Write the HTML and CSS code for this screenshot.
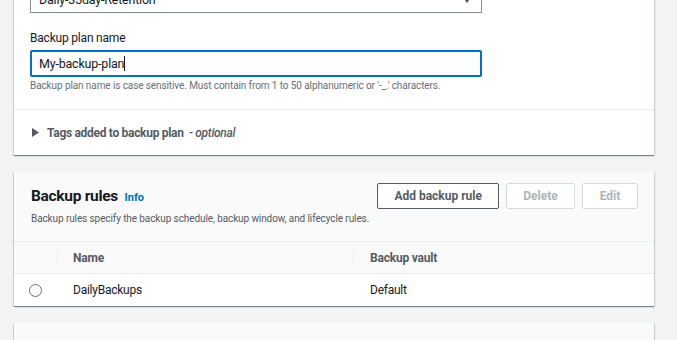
FILE: index.html
```html
<!DOCTYPE html>
<html lang="en">
<head>
  <meta charset="UTF-8">
  <meta name="viewport" content="width=device-width, initial-scale=1.0">
  <title>Create backup plan</title>
  <link rel="stylesheet" href="styles.css">
</head>
<body>

<div class="content">
  <div class="card plan-card">
    <div class="card-body">
      <div class="select-box">
        <span>Daily-35day-Retention</span>
        <svg class="caret" width="10" height="8" viewBox="0 0 10 8"><path d="M0 0h10L5 7z" fill="#545b64"/></svg>
      </div>

      <label class="field-label" for="plan-name">Backup plan name</label>
      <div class="text-input">My-backup-plan<span class="cursor"></span></div>
      <div class="hint">Backup plan name is case sensitive. Must contain from 1 to 50 alphanumeric or '-_.' characters.</div>
    </div>
    <div class="card-footer">
      <svg class="expand" width="7" height="9" viewBox="0 0 7 9"><path d="M0 0l7 4.5L0 9z" fill="#545b64"/></svg>
      <span class="tags-title">Tags added to backup plan</span>
      <span class="optional">  - optional</span>
    </div>
  </div>

  <div class="card rules-card">
    <div class="rules-header">
      <div class="rules-top">
        <h2>Backup rules <a class="info" href="#">Info</a></h2>
        <div class="actions">
          <button class="btn">Add backup rule</button>
          <button class="btn disabled">Delete</button>
          <button class="btn disabled edit">Edit</button>
        </div>
      </div>
      <p class="desc">Backup rules specify the backup schedule, backup window, and lifecycle rules.</p>
    </div>
    <div class="table">
      <div class="row head">
        <div class="cell sel"></div>
        <div class="cell name"><span class="sep"></span>Name</div>
        <div class="cell vault"><span class="sep"></span>Backup vault</div>
      </div>
      <div class="row">
        <div class="cell sel"><span class="radio"></span></div>
        <div class="cell name">DailyBackups</div>
        <div class="cell vault">Default</div>
      </div>
    </div>
  </div>

  <div class="card next-card"></div>
</div>

</body>
</html>
```

FILE: styles.css
```css
body {
  margin: 0;
  background-color: #f2f3f3;
  font-family: Roboto, "Liberation Sans", sans-serif;
  color: #16191f;
}

.content {
  width: 640px;
  margin-left: 14px;
  margin-top: -34px;
}

.card {
  background-color: #fff;
  box-shadow: 0 1px 1px 0 rgba(0, 28, 36, 0.35), 1px 1px 1px 0 rgba(0, 28, 36, 0.12), -1px 1px 1px 0 rgba(0, 28, 36, 0.12);
  margin-bottom: 17px;
}

.card-body {
  padding: 20px 16px 17px 16px;
}

.select-box {
  height: 25px;
  border: 1px solid #879596;
  display: flex;
  align-items: center;
  justify-content: space-between;
  padding: 0 9px 0 8px;
  box-sizing: content-box;
  width: 433px;
  font-size: 12.5px;
  letter-spacing: -0.2px;
}

.field-label {
  display: block;
  font-size: 12px;
  letter-spacing: -0.2px;
  margin-top: 17px;
  line-height: 16px;
}

.text-input {
  margin-top: 4px;
  height: 23px;
  border: 2px solid #0073bb;
  border-radius: 2px;
  font-size: 12.5px;
  letter-spacing: -0.2px;
  line-height: 23px;
  padding-left: 7px;
  box-sizing: content-box;
  width: 441px;
}

.cursor {
  display: inline-block;
  width: 1px;
  height: 15px;
  background-color: #16191f;
  vertical-align: -3px;
}

.hint {
  font-size: 10px;
  letter-spacing: -0.1px;
  color: #687078;
  margin-top: 3px;
  line-height: 12px;
}

.card-footer {
  border-top: 1px solid #eaeded;
  height: 45px;
  display: flex;
  align-items: center;
  padding-left: 18px;
  font-size: 12px;
  letter-spacing: -0.3px;
  color: #545b64;
}

.card-footer .expand {
  margin-right: 8px;
}

.tags-title {
  font-weight: bold;
}

.optional {
  font-style: italic;
  font-weight: 500;
  white-space: pre;
}

.rules-card {
  overflow: hidden;
}

.rules-header {
  background-color: #fafafa;
  padding: 11px 16px 0 17px;
  height: 58px;
  border-bottom: 1px solid #eaeded;
}

.rules-top {
  display: flex;
  justify-content: space-between;
  align-items: center;
}

.rules-top h2 {
  margin: 0;
  font-size: 15.5px;
  letter-spacing: -0.3px;
  font-weight: bold;
}

.info {
  font-size: 11px;
  letter-spacing: 0;
  color: #0073bb;
  text-decoration: none;
  margin-left: 3px;
  font-weight: bold;
}

.actions {
  display: flex;
  gap: 7px;
}

.btn {
  font-family: inherit;
  height: 26px;
  padding: 0 16px;
  background-color: #fff;
  border: 1px solid #545b64;
  border-radius: 2px;
  color: #545b64;
  font-weight: bold;
  font-size: 12px;
}

.btn.disabled {
  border-color: #d5dbdb;
  color: #aab7b8;
  width: 69px;
}

.btn.edit {
  width: 56px;
}

.desc {
  margin: 4px 0 0 0;
  font-size: 10px;
  letter-spacing: -0.1px;
  color: #545b64;
}

.row {
  display: flex;
  height: 32px;
  align-items: center;
  font-size: 12px;
  letter-spacing: -0.25px;
}

.row.head {
  height: 31px;
  background-color: #fafafa;
  border-bottom: 1px solid #eaeded;
  color: #545b64;
  font-weight: bold;
  letter-spacing: -0.2px;
}

.cell {
  position: relative;
  display: flex;
  align-items: center;
  height: 100%;
}

.cell.sel {
  width: 43px;
  justify-content: center;
}

.cell.name {
  width: 280px;
  padding-left: 16px;
}

.cell.vault {
  padding-left: 17px;
}

.sep {
  position: absolute;
  left: 0;
  top: 8px;
  bottom: 7px;
  border-left: 1px solid #eaeded;
}

.radio {
  width: 11px;
  height: 11px;
  border: 1px solid #687078;
  border-radius: 50%;
}

.next-card {
  height: 40px;
  background-color: #fafafa;
}
```
